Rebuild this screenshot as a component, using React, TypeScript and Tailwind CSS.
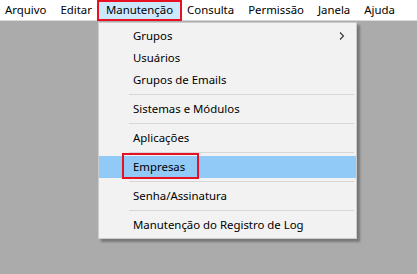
import React from "react";

const font = { fontFamily: '"Noto Sans", "Open Sans", sans-serif' };

function Item({ label, sub, active }: { label: string; sub?: boolean; active?: boolean }) {
  return (
    <div className={`relative flex h-[22px] items-center ${active ? "bg-[#91c9f7]" : ""}`}>
      <span className="pl-[34px] text-[11.4px] leading-none text-black">{label}</span>
      {sub && (
        <svg className="absolute right-[11px] top-[7px]" width="6" height="8" viewBox="0 0 6 8">
          <path d="M1 0.5 L4.5 4 L1 7.5" fill="none" stroke="#333" strokeWidth="1.1" />
        </svg>
      )}
      {active && (
        <div className="absolute left-[23px] top-[-3px] h-[26px] w-[77px] border-2 border-[#e81123]" />
      )}
    </div>
  );
}

function Sep() {
  return (
    <div className="flex h-[7px] items-center pl-[30px] pr-[2px]">
      <div className="h-px w-full bg-[#d7d7d7]" />
    </div>
  );
}

export default function App() {
  const menus = ["Arquivo", "Editar", "Manutenção", "Consulta", "Permissão", "Janela", "Ajuda"];
  return (
    <div className="relative h-[274px] w-[417px] overflow-hidden bg-[#ababab]" style={font}>
      <div className="flex h-[21px] items-center border-b border-[#dadada] bg-white">
        <div className="flex -ml-[2px]">
          {menus.map((m) => (
            <div
              key={m}
              className={`relative flex h-[19px] items-center px-[7px] text-[11.4px] text-black ${
                m === "Manutenção" ? "bg-[#cce8ff]" : ""
              }`}
            >
              {m}
              {m === "Manutenção" && (
                <div className="absolute inset-x-[-2px] top-[-1px] bottom-[-1px] border-2 border-[#e81123]" />
              )}
            </div>
          ))}
        </div>
      </div>
      <div className="absolute left-[98px] top-[22px] w-[259px] border border-[#cccccc] bg-[#f2f2f2] py-[2px] shadow-[3px_3px_2px_rgba(0,0,0,0.3)]">
        <Item label="Grupos" sub />
        <Item label="Usuários" />
        <Item label="Grupos de Emails" />
        <Sep />
        <Item label="Sistemas e Módulos" />
        <Sep />
        <Item label="Aplicações" />
        <Sep />
        <Item label="Empresas" active />
        <Sep />
        <Item label="Senha/Assinatura" />
        <Sep />
        <Item label="Manutenção do Registro de Log" />
      </div>
    </div>
  );
}
